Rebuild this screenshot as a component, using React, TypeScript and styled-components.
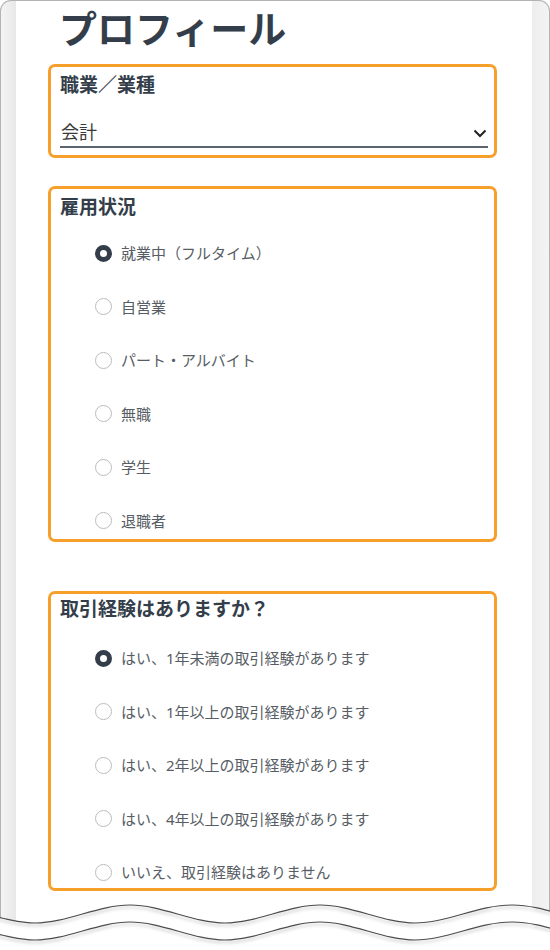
import React from 'react';
import styled, { createGlobalStyle } from 'styled-components';

const GlobalStyle = createGlobalStyle`
  html, body {
    margin: 0;
    padding: 0;
    background: #ffffff;
  }
  * {
    box-sizing: border-box;
  }
`;

const Page = styled.div`
  position: relative;
  width: 550px;
  height: 950px;
  overflow: hidden;
  font-family: 'Noto Sans', 'Noto Sans CJK JP', sans-serif;
`;

const Device = styled.div`
  width: 550px;
  height: 950px;
  border: 1px solid #b3b3b3;
  border-bottom: none;
  border-radius: 11px 11px 0 0;
  padding: 0 17px 0 15px;
  background: linear-gradient(
    to right,
    #f4f4f4 0px,
    #e8e8e8 15px,
    #eeeeee calc(100% - 17px),
    #f3f3f3 100%
  );
`;

const Screen = styled.main`
  height: 100%;
  background: #ffffff;
  padding: 5px 35px 0 32px;
`;

const Title = styled.h1`
  margin: 0 0 14px;
  padding-left: 11px;
  font-size: 38px;
  line-height: 44px;
  font-weight: 700;
  color: #343e4a;
`;

const Card = styled.section<{ $padTop: number; $padBottom: number }>`
  border: 3px solid #f6a02b;
  border-radius: 7px;
  padding: ${(p) => p.$padTop}px 6px ${(p) => p.$padBottom}px 9px;
  margin-bottom: 28px;

  &:last-child {
    margin-bottom: 0;
  }
`;

const Spacer = styled.div`
  height: 21px;
`;

const Label = styled.h2`
  margin: 0;
  font-size: 19px;
  line-height: 24px;
  font-weight: 700;
  color: #343e4a;
`;

const SelectRow = styled.div`
  margin-top: 23px;
  display: flex;
  align-items: center;
  border-bottom: 2px solid #5c646e;
  padding-bottom: 2px;
`;

const Select = styled.select`
  flex: 1;
  appearance: none;
  -webkit-appearance: none;
  border: none;
  background: transparent;
  padding: 0 0 0 1px;
  margin: 0;
  height: 24px;
  font-family: inherit;
  font-size: 18px;
  line-height: 24px;
  color: #3a3a3a;
  outline: none;
`;

const Chevron = styled.svg`
  width: 14px;
  height: 9px;
  margin: 2px 1px 0 0;
  flex-shrink: 0;
`;

const RadioGroup = styled.div<{ $offset: number }>`
  margin-top: ${(p) => p.$offset}px;
  padding-left: 35px;
  display: flex;
  flex-direction: column;
  gap: 29.5px;
`;

const RadioRow = styled.label`
  display: flex;
  align-items: center;
  gap: 9px;
  height: 24px;
  font-size: 15px;
  line-height: 24px;
  color: #575d64;
  cursor: pointer;
`;

const Radio = styled.input.attrs({ type: 'radio' })`
  appearance: none;
  -webkit-appearance: none;
  margin: 0;
  width: 17px;
  height: 17px;
  border-radius: 50%;
  border: 1px solid #bcbcbc;
  background: #ffffff;
  flex-shrink: 0;

  &:checked {
    border: 5px solid #343e4a;
  }
`;

const Tear = styled.svg`
  position: absolute;
  left: 0;
  bottom: 0;
  width: 550px;
  height: 60px;
`;

const employment = ['就業中（フルタイム）', '自営業', 'パート・アルバイト', '無職', '学生', '退職者'];

const experience = [
  'はい、1年未満の取引経験があります',
  'はい、1年以上の取引経験があります',
  'はい、2年以上の取引経験があります',
  'はい、4年以上の取引経験があります',
  'いいえ、取引経験はありません',
];

// one torn line of the paper edge, shifted down by dy
const wave = (dy: number) =>
  `M -60,${15 + dy} C -28,${15 + dy} 3,${33 + dy} 35,${33 + dy} ` +
  `S 98,${15 + dy} 130,${15 + dy} S 193,${33 + dy} 225,${33 + dy} ` +
  `S 288,${15 + dy} 320,${15 + dy} S 383,${33 + dy} 415,${33 + dy} ` +
  `S 478,${15 + dy} 512,${15 + dy} S 575,${33 + dy} 607,${33 + dy}`;

const App: React.FC = () => {
  return (
    <Page>
      <GlobalStyle />
      <Device>
        <Screen>
          <Title>プロフィール</Title>

          <Card $padTop={6} $padBottom={7}>
            <Label>職業／業種</Label>
            <SelectRow>
              <Select defaultValue="accounting">
                <option value="accounting">会計</option>
                <option value="sales">営業</option>
                <option value="it">IT</option>
              </Select>
              <Chevron viewBox="0 0 14 9">
                <polyline points="1.5,1.5 7,7 12.5,1.5" fill="none" stroke="#222" strokeWidth="2" />
              </Chevron>
            </SelectRow>
          </Card>

          <Card $padTop={5.5} $padBottom={6.5}>
            <Label>雇用状況</Label>
            <RadioGroup $offset={22.5}>
              {employment.map((item, i) => (
                <RadioRow key={item}>
                  <Radio name="employment" defaultChecked={i === 0} />
                  {item}
                </RadioRow>
              ))}
            </RadioGroup>
          </Card>

          <Spacer />

          <Card $padTop={3} $padBottom={4}>
            <Label>取引経験はありますか？</Label>
            <RadioGroup $offset={25}>
              {experience.map((item, i) => (
                <RadioRow key={item}>
                  <Radio name="experience" defaultChecked={i === 0} />
                  {item}
                </RadioRow>
              ))}
            </RadioGroup>
          </Card>
        </Screen>
      </Device>

      <Tear viewBox="0 0 550 60">
        <defs>
          <filter id="tear-shadow" x="-10%" y="-50%" width="120%" height="200%">
            <feDropShadow dx="0" dy="2.5" stdDeviation="1.6" floodColor="#000" floodOpacity="0.28" />
          </filter>
        </defs>
        <path d={`${wave(0)} L 607,60 L -60,60 Z`} fill="#ffffff" />
        <path d={wave(0)} fill="none" stroke="#4d4d4d" strokeWidth="1.2" filter="url(#tear-shadow)" />
        <path d={wave(17)} fill="none" stroke="#4d4d4d" strokeWidth="1.2" filter="url(#tear-shadow)" />
      </Tear>
    </Page>
  );
};

export default App;
